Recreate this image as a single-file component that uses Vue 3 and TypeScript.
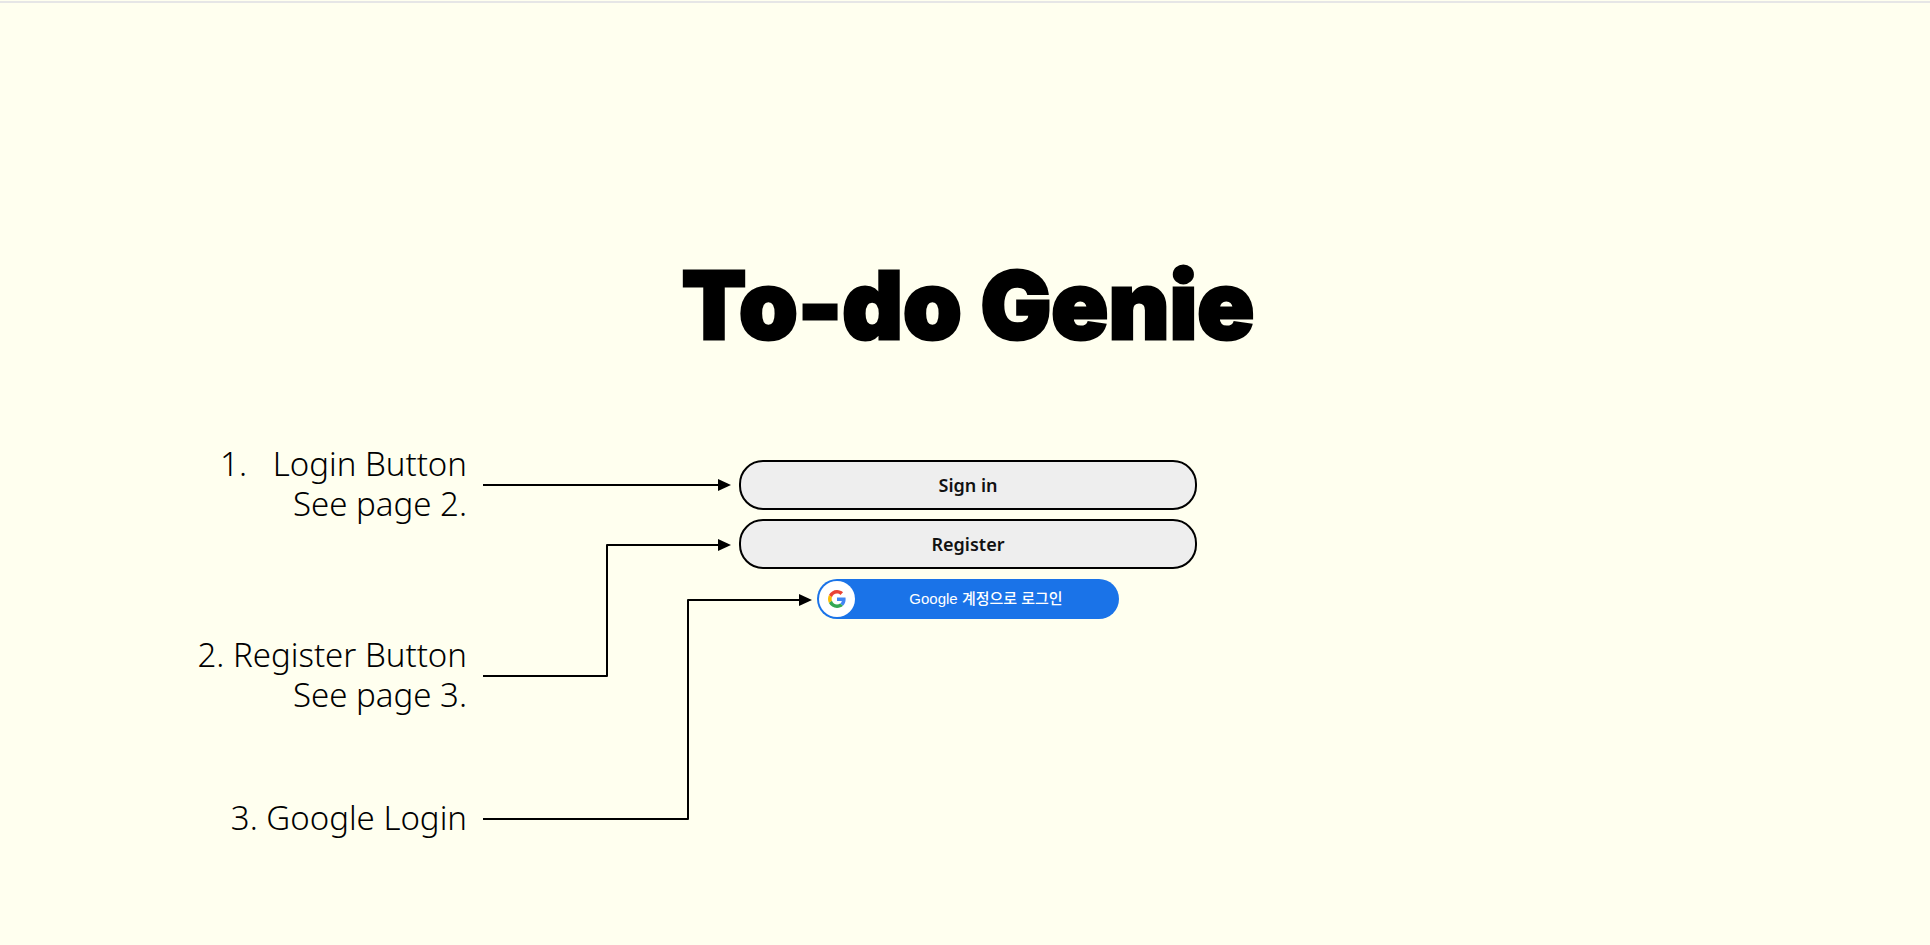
<script setup lang="ts">
interface Note {
  id: string
  lines: string[]
}

const notes: Note[] = [
  { id: 'login', lines: ['1.\u00a0\u00a0\u00a0Login Button', 'See page 2.'] },
  { id: 'register', lines: ['2. Register Button', 'See page 3.'] },
  { id: 'google', lines: ['3. Google Login'] },
]
</script>

<template>
  <main class="page">
    <h1 class="title">To-do Genie</h1>
    <div class="board">
      <div class="guide">
        <div class="notes">
          <p v-for="note in notes" :key="note.id" class="note" :class="note.id">
            <span v-for="line in note.lines" :key="line" class="line">{{ line }}</span>
          </p>
        </div>
        <svg class="arrows" width="256" height="400" viewBox="0 0 256 400" aria-hidden="true">
          <g fill="none" stroke="#000" stroke-width="2" stroke-linejoin="round">
            <path d="M0 42H238" />
            <path d="M0 233H124V102H238" />
            <path d="M0 376H205V157H318" />
          </g>
          <path d="M235 36L248 42L235 48Z" />
          <path d="M235 96L248 102L235 108Z" />
          <path d="M316 151L329 157L316 163Z" />
        </svg>
      </div>
      <div class="actions">
        <button type="button" class="pill">Sign in</button>
        <button type="button" class="pill">Register</button>
        <button type="button" class="google-button">
          <span class="badge">
            <svg width="18" height="18" viewBox="0 0 48 48" aria-hidden="true">
              <path fill="#EA4335" d="M24 9.5c3.54 0 6.71 1.22 9.21 3.6l6.85-6.85C35.9 2.38 30.47 0 24 0 14.62 0 6.51 5.38 2.56 13.22l7.98 6.19C12.43 13.72 17.74 9.5 24 9.5z" />
              <path fill="#4285F4" d="M46.98 24.55c0-1.57-.15-3.09-.38-4.55H24v9.02h12.94c-.58 2.96-2.26 5.48-4.78 7.18l7.73 6c4.51-4.18 7.09-10.36 7.09-17.65z" />
              <path fill="#FBBC05" d="M10.53 28.59c-.48-1.45-.76-2.99-.76-4.59s.27-3.14.76-4.59l-7.98-6.19C.92 16.46 0 20.12 0 24c0 3.88.92 7.54 2.56 10.78l7.97-6.19z" />
              <path fill="#34A853" d="M24 48c6.48 0 11.93-2.13 15.89-5.81l-7.73-6c-2.15 1.45-4.92 2.3-8.16 2.3-6.26 0-11.57-4.22-13.47-9.91l-7.98 6.19C6.51 42.62 14.62 48 24 48z" />
            </svg>
          </span>
          <span class="google-label">Google 계정으로 로그인</span>
        </button>
      </div>
    </div>
  </main>
</template>

<style>
body {
  margin: 0;
  padding-top: 1px;
  background: #ffffef;
}
</style>

<style scoped>
.page {
  box-sizing: border-box;
  min-height: calc(100vh - 1px);
  padding: 234px 0 0 6px;
  border-top: 2px solid #e6e6e6;
  color: #000;
}

.title {
  margin: 0;
  text-align: center;
  font: 900 94px/136px Inter, sans-serif;
  -webkit-text-stroke: 3px #000;
}

.board {
  display: grid;
  grid-template-columns: 1fr 458px 1fr;
  margin-top: 70px;
}

.guide {
  display: flex;
  justify-content: flex-end;
  gap: 16px;
}

.notes {
  padding-top: 1px;
  text-align: right;
}

.note {
  margin: 0;
  font: 360 33px/40px "Noto Sans", sans-serif;
  white-space: nowrap;
}

.note.register {
  margin-top: 111px;
}

.note.google {
  margin-top: 83px;
}

.line {
  display: block;
}

.arrows {
  flex: none;
  overflow: visible;
}

.actions {
  display: flex;
  flex-direction: column;
  align-items: center;
  gap: 9px;
  padding-top: 17px;
}

.pill {
  width: 100%;
  height: 50px;
  padding: 0;
  border: 2px solid #000;
  border-radius: 24px;
  background: #eee;
  color: #111;
  font: 600 18px/24px "Noto Sans", sans-serif;
}

.google-button {
  display: flex;
  align-items: center;
  box-sizing: border-box;
  width: 302px;
  height: 40px;
  padding: 2px;
  margin-top: 1px;
  border: 0;
  border-radius: 20px;
  background: #1a73e8;
  color: #fff;
}

.badge {
  display: flex;
  align-items: center;
  justify-content: center;
  width: 36px;
  height: 36px;
  border-radius: 50%;
  background: #fff;
}

.google-label {
  flex: 1;
  text-align: center;
  font: 500 15px/20px "Liberation Sans", "Noto Sans CJK KR", sans-serif;
}
</style>
